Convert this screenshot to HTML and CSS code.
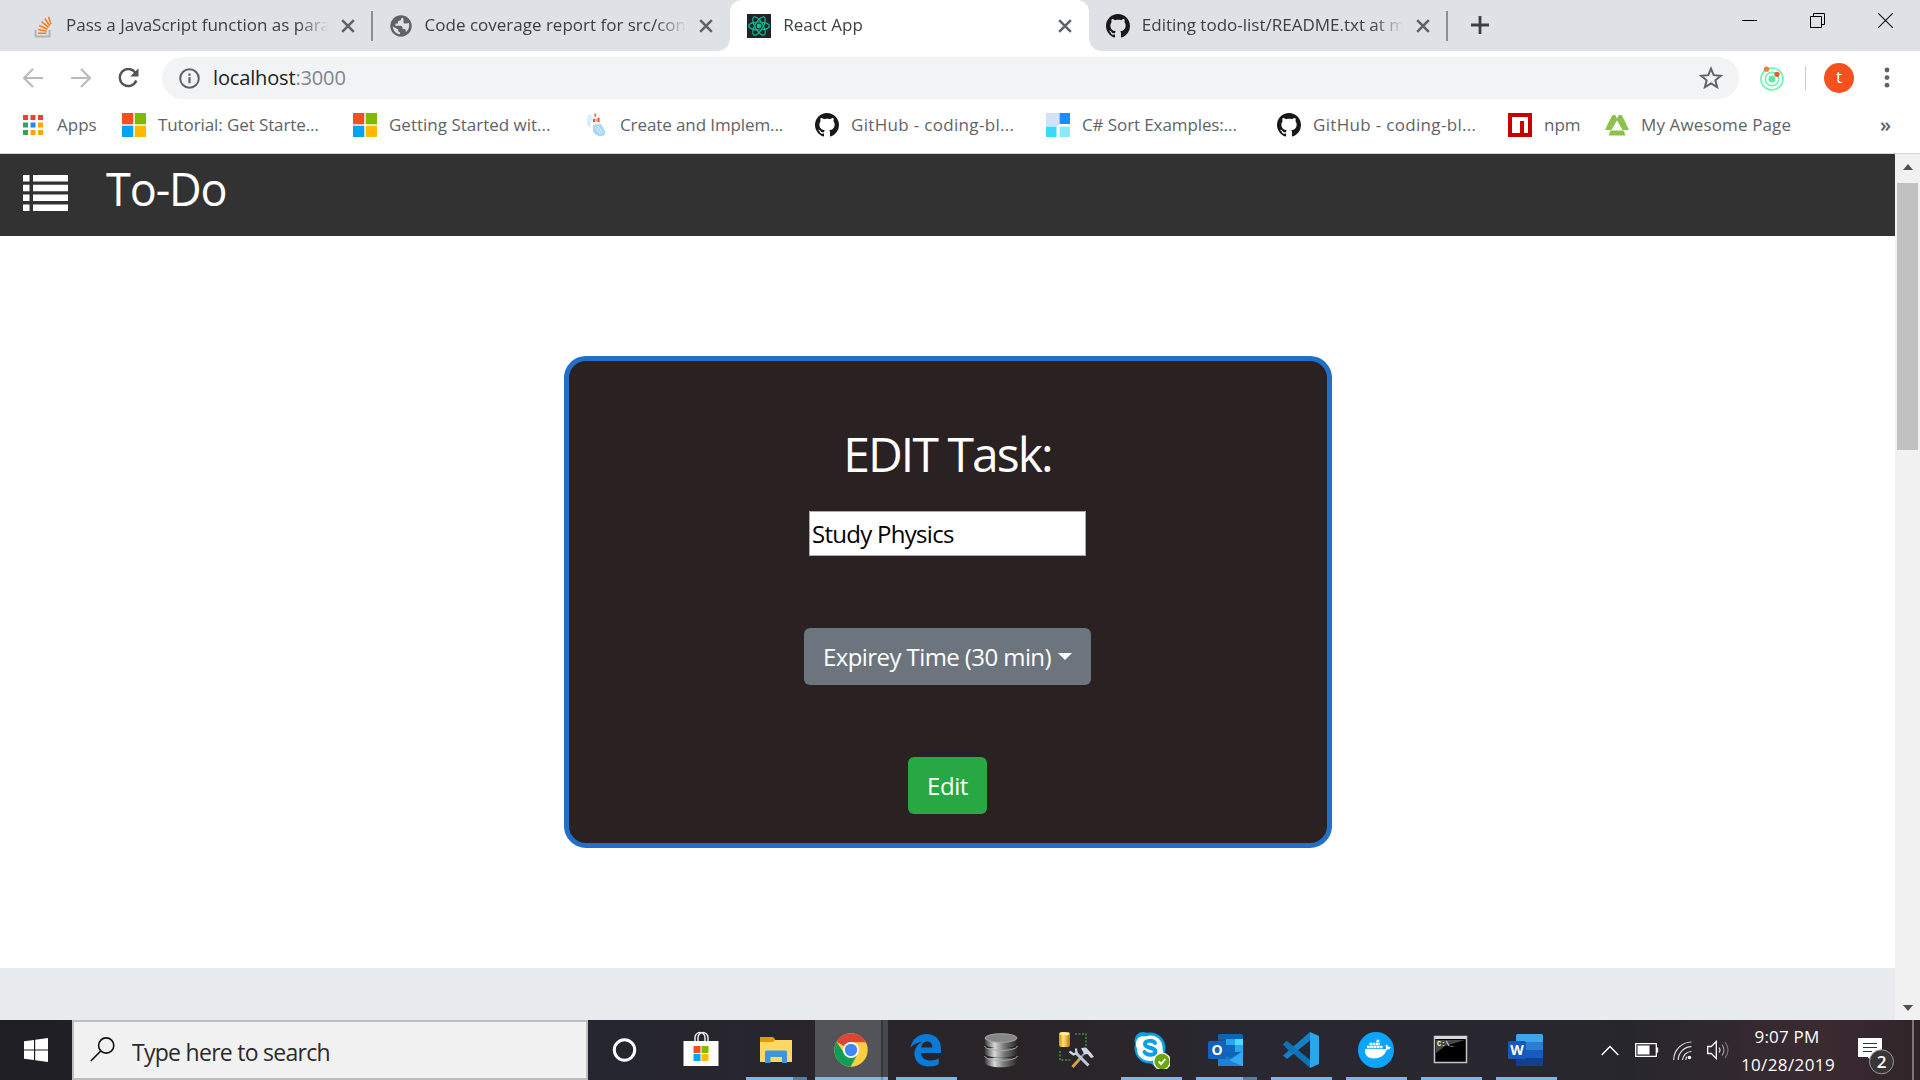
FILE: index.html
```html
<!DOCTYPE html>
<html lang="en">
<head>
<meta charset="utf-8">
<title>React App</title>
<link rel="stylesheet" href="styles.css">
</head>
<body>
<svg class="defs" width="0" height="0" aria-hidden="true">
  <symbol id="github" viewBox="0 0 16 16"><path fill="#191717" d="M8 0C3.58 0 0 3.58 0 8c0 3.54 2.29 6.53 5.47 7.59.4.07.55-.17.55-.38 0-.19-.01-.82-.01-1.49-2.01.37-2.53-.49-2.69-.94-.09-.23-.48-.94-.82-1.13-.28-.15-.68-.52-.01-.53.63-.01 1.08.58 1.23.82.72 1.21 1.87.87 2.33.66.07-.52.28-.87.51-1.07-1.78-.2-3.64-.89-3.64-3.95 0-.87.31-1.59.82-2.15-.08-.2-.36-1.02.08-2.12 0 0 .67-.21 2.2.82.64-.18 1.32-.27 2-.27s1.36.09 2 .27c1.53-1.04 2.2-.82 2.2-.82.44 1.1.16 1.92.08 2.12.51.56.82 1.27.82 2.15 0 3.07-1.87 3.75-3.65 3.95.29.25.54.73.54 1.48 0 1.07-.01 1.93-.01 2.2 0 .21.15.46.55.38A8.01 8.01 0 0 0 16 8c0-4.42-3.58-8-8-8z"/></symbol>
  <symbol id="close" viewBox="0 0 12 12"><path d="M1 1l10 10M11 1L1 11" stroke="#5f6368" stroke-width="2.200" fill="none"/></symbol>
  <symbol id="microsoft" viewBox="0 0 24 24"><path fill="#f25022" d="M0 0h11.3v11.3H0z"/><path fill="#7fba00" d="M12.7 0H24v11.3H12.7z"/><path fill="#00a4ef" d="M0 12.7h11.3V24H0z"/><path fill="#ffb900" d="M12.7 12.7H24V24H12.7z"/></symbol>
</svg>

<header class="tabs">
  <div class="tab">
    <svg class="icon24" viewBox="0 0 24 24"><path d="M5.500 16v6.500h14V16" fill="none" stroke="#b3b3b3" stroke-width="2"/><path d="M8 19.300h8.500M8.200 15.500l8.500 1.800M9.200 11.400l8.200 3.800M11.500 7.700l7 5.700M14.800 4.500l5 7.500M18.500 2.800l2.500 7.500" stroke="#f48024" stroke-width="1.600"/></svg>
    <span class="tab-title">Pass a JavaScript function as para</span>
    <svg class="close"><use href="#close"/></svg>
  </div>
  <div class="tab">
    <svg class="icon24" viewBox="0 0 24 24"><circle cx="12" cy="12" r="10.700" fill="#5f6368"/><path fill="#dee1e6" d="M14 3.800c-1.200 0-2 .8-2 1.800 0 .8-.6 1.200-1.500 1.200-1 0-1.500.5-1.500 1.400v1.200H7.500c-.8 0-1.200.6-1.200 1.300v1h5.200c1.200 0 2 .8 2 2v1.200h1.800c1 0 1.500.6 1.500 1.500v1.800c2-1.600 3.400-4 3.400-6.700 0-1-.2-1.900-.5-2.700-.5.5-1.200.8-2 .8h-1.500c-1 0-1.700-.8-1.700-1.700V6c0-.9-.2-1.600-.5-2.200zM3.700 12.500c.2 4 3.300 7.300 7.300 7.800v-2c-1 0-1.800-.8-1.800-1.800v-1z"/></svg>
    <span class="tab-title">Code coverage report for src/con</span>
    <svg class="close"><use href="#close"/></svg>
  </div>
  <div class="tab active">
    <svg class="icon24" viewBox="0 0 24 24"><path fill="#20232a" d="M0 0h24v24H0z"/><g fill="none" stroke="#0bbf93" stroke-width="1.200"><ellipse cx="12" cy="12" rx="10.300" ry="4"/><ellipse cx="12" cy="12" rx="10.300" ry="4" transform="rotate(60 12 12)"/><ellipse cx="12" cy="12" rx="10.300" ry="4" transform="rotate(120 12 12)"/></g><circle cx="12" cy="12" r="2.400" fill="#0bbf93"/></svg>
    <span class="tab-title">React App</span>
    <svg class="close"><use href="#close"/></svg>
  </div>
  <div class="tab">
    <svg class="icon24"><use href="#github"/></svg>
    <span class="tab-title">Editing todo-list/README.txt at m</span>
    <svg class="close"><use href="#close"/></svg>
  </div>
  <svg class="newtab" viewBox="0 0 18 18"><path d="M9 0v18M0 9h18" stroke="#3c4043" stroke-width="2.800"/></svg>
  <div class="winctl">
    <svg width="15" height="15" viewBox="0 0 15 15"><path d="M0 7.500h15" stroke="#000"/></svg>
    <svg width="15" height="15" viewBox="0 0 15 15"><path d="M.5 3.500h11v11H.5zM3.500 3.500v-3h11v11h-3" fill="none" stroke="#000"/></svg>
    <svg width="15" height="15" viewBox="0 0 15 15"><path d="M0 0l15 15M15 0L0 15" stroke="#111" stroke-width="1.100"/></svg>
  </div>
</header>

<div class="toolbar">
  <svg class="nav-icon" viewBox="0 0 20 20"><path d="M20 10H1.500M10 1L1 10l9 9" fill="none" stroke="#b8babc" stroke-width="2.200"/></svg>
  <svg class="nav-icon" viewBox="0 0 20 20"><path d="M0 10h18.500M10 1l9 9-9 9" fill="none" stroke="#b8babc" stroke-width="2.200"/></svg>
  <svg class="nav-icon reload" viewBox="0 0 21 20"><path d="M17.300 4.600A8.500 8.500 0 1 0 18.300 12.500" fill="none" stroke="#505357" stroke-width="2.400"/><path d="M20.500.2V8.500h-8.300z" fill="#505357"/></svg>
  <div class="omnibox">
    <svg class="info" viewBox="0 0 21 21"><circle cx="10.500" cy="10.500" r="9.300" fill="none" stroke="#5f6368" stroke-width="2"/><path d="M10.500 9.200v6M10.500 5.500v2.200" stroke="#5f6368" stroke-width="2.200"/></svg>
    <span class="url">localhost<span class="port">:3000</span></span>
    <svg class="star" viewBox="0 0 22 22"><path d="M11 2.400l2.500 6 6.500.5-5 4.200 1.600 6.300L11 16l-5.600 3.400L7 13.100 2 8.900l6.500-.5z" fill="none" stroke="#5f6368" stroke-width="1.800"/></svg>
  </div>
  <svg class="ext" viewBox="0 0 24 24"><g fill="none" stroke="#6ef5b8" stroke-width="1.700"><circle cx="12" cy="12.500" r="11"/><circle cx="12" cy="12.500" r="6.700"/></g><circle cx="12" cy="12.500" r="3.500" fill="#5fe9a5"/><circle cx="6.500" cy="2.700" r="2.600" fill="#f47c3c"/><circle cx="17" cy="7.800" r="2.600" fill="#f4552e"/></svg>
  <div class="tool-sep"></div>
  <div class="avatar">t</div>
  <svg class="dots" viewBox="0 0 6 22"><g fill="#5f6368"><circle cx="3" cy="3" r="2.400"/><circle cx="3" cy="10.600" r="2.400"/><circle cx="3" cy="18.200" r="2.400"/></g></svg>
</div>

<nav class="bookmarks">
  <div class="bm b0"><svg width="20" height="20" viewBox="0 0 20 20"><path fill="#ea4335" d="M0 0h5v5H0zM7.500 0h5v5h-5zM15 0h5v5h-5z"/><path fill="#34a063" d="M0 7.500h5v5H0zM0 15h5v5H0z"/><path fill="#1e88f5" d="M7.500 7.500h5v5h-5z"/><path fill="#f9a800" d="M15 7.500h5v5h-5zM7.500 15h5v5h-5zM15 15h5v5h-5z"/></svg><span>Apps</span></div>
  <div class="bm b1"><svg class="icon24"><use href="#microsoft"/></svg><span>Tutorial: Get Starte...</span></div>
  <div class="bm b2"><svg class="icon24"><use href="#microsoft"/></svg><span>Getting Started wit...</span></div>
  <div class="bm b3"><svg class="icon24" viewBox="0 0 24 24"><path fill="#d9eefa" d="M3 4l3-3 3 3-2 6-1 5-3-3z"/><path fill="#fdeee6" d="M8 3l3-2 5 3 1 6-7 1z"/><path fill="#e8503a" d="M10.500.5h1.500v3h-1.500zM9 6h2v3H9zM13.500 5h2v4h-2z"/><path fill="#f3a25f" d="M11.500 6h1.500v2.500h-1.500z"/><path fill="#a9d8f4" d="M9 12c3-1 6-1 8-1l4 7c1 3-1 5-4 5-4 0-7-2-8-5z"/><path d="M11 14l6 7M14 13l5 7" stroke="#e0f2fc"/></svg><span>Create and Implem...</span></div>
  <div class="bm b4"><svg class="icon24"><use href="#github"/></svg><span>GitHub - coding-bl...</span></div>
  <div class="bm b5"><svg class="icon24" viewBox="0 0 24 24"><path fill="#d2e3f8" d="M0 0h13v13H0z"/><path fill="#1a8cff" d="M13.500 0H24v11H13.500z"/><path fill="#38dcfb" d="M0 13.500h10.500V24H0z"/><path fill="#86ecfb" d="M13.500 13.500H24V24H13.500z"/></svg><span>C# Sort Examples:...</span></div>
  <div class="bm b6"><svg class="icon24"><use href="#github"/></svg><span>GitHub - coding-bl...</span></div>
  <div class="bm b7"><svg class="icon24" viewBox="0 0 24 24"><path fill="#cb0000" d="M0 0h24v24H0z"/><path fill="#fff" d="M4 4h16v16h-4V8h-4v12H4z"/></svg><span>npm</span></div>
  <div class="bm b8"><svg class="icon24" viewBox="0 0 24 24"><path fill="#8bc34a" d="M7.500 2h2.700l1.800 3.500L13.800 2h2.700L20 8.500l4 8.500h-6.500L12 7.500 6.500 17H0l4-8.500zM5.500 17.500h13l2 5h-17z"/><path fill="#fff" d="M12 8l4.200 8H7.800z"/></svg><span>My Awesome Page</span></div>
  <span class="more">»</span>
</nav>

<main class="viewport">
  <div class="page">
    <header class="app-bar">
      <svg class="list" viewBox="0 0 45 36"><path fill="#fff" d="M0 0h6.500v6.500H0zM10 0h35v6.500H10zM0 9.800h6.500v6.500H0zM10 9.800h35v6.500H10zM0 19.600h6.500v6.500H0zM10 19.600h35v6.500H10zM0 29.400h6.500v6.500H0zM10 29.400h35v6.500H10z"/></svg>
      <span class="brand">To-Do</span>
    </header>
    <section class="stage">
      <form class="card">
        <h1><span>EDIT Task:</span></h1>
        <div class="field"><span>Study Physics</span></div>
        <div class="btn select"><span>Expirey Time (30 min)</span><i class="caret"></i></div>
        <div class="btn submit"><span>Edit</span></div>
      </form>
    </section>
    <div class="band"></div>
  </div>
  <div class="scrollbar"><i class="arrow up"></i><div class="thumb"></div><i class="arrow down"></i></div>
</main>

<footer class="taskbar">
  <div class="start"><svg width="24" height="24" viewBox="0 0 24 24"><path fill="#fff" d="M0 3.300l10-1.400v9.500H0zM11.200 1.700L24 0v11.400H11.200zM0 12.600h10v9.500L0 20.700zM11.200 12.600H24V24l-12.800-1.700z"/></svg></div>
  <div class="search">
    <svg width="25" height="25" viewBox="0 0 25 25"><circle cx="16.200" cy="8.500" r="7.600" fill="none" stroke="#111" stroke-width="1.600"/><path d="M10.800 14L.8 24" stroke="#111" stroke-width="1.700"/></svg>
    <span>Type here to search</span>
  </div>
  <div class="apps">
    <div class="app"><svg width="38" height="38" viewBox="0 0 38 38"><circle cx="17.500" cy="19" r="10.200" fill="none" stroke="#fff" stroke-width="3"/></svg></div>
    <div class="app"><svg width="38" height="38" viewBox="0 0 38 38"><path d="M13 12V8a5 5 0 0 1 10 0v4M16 12V8a5 5 0 0 1 10 0v4" transform="translate(0 -1.500)" fill="none" stroke="#e8e8e8" stroke-width="1.500"/><path fill="#fff" d="M1.500 10h35v25h-35z"/><path fill="#f25022" d="M11.500 15h7v7h-7z"/><path fill="#7fba00" d="M19.500 15h7v7h-7z"/><path fill="#00a4ef" d="M11.500 23h7v7h-7z"/><path fill="#ffb900" d="M19.500 23h7v7h-7z"/></svg></div>
    <div class="app open multi"><svg width="38" height="38" viewBox="0 0 38 38"><path fill="#e09b00" d="M3 6h13l2 2v5H3z"/><path fill="#ffd765" d="M3 11h13l2-2h17v22H3z"/><path fill="#3f95dd" d="M8 21q0-1.500 1.500-1.500h19q1.500 0 1.500 1.500v11h-5v-6H13.500v6H8z"/></svg></div>
    <div class="app current"><svg width="38" height="38" viewBox="0 0 38 38"><circle cx="19" cy="19" r="16.700" fill="#ffcd40"/><path fill="#db4437" d="M19 19L4.500 10.700A16.700 16.700 0 0 1 33.800 11.300H19z"/><path fill="#0f9d58" d="M4.500 10.700A16.700 16.700 0 0 0 18.500 35.700L25.700 23 12 22z"/><circle cx="19" cy="19" r="8" fill="#fff"/><circle cx="19" cy="19" r="6.200" fill="#4285f4"/></svg></div>
    <div class="app open"><svg width="38" height="38" viewBox="0 0 38 38"><path fill="#0a7ad9" d="M3.500 17C5 8 11.500 3 19.500 3 29 3 34 9.500 34 18v4H14c.3 5 4.600 7.500 9.500 7.500 3.300 0 6-.8 8.200-2.200v6C29 35 26 35.500 22 35.500 13 35.500 7.500 30.500 7.500 23c0-5.500 3-9.700 7.500-12C9.500 11.500 5.500 13.500 3.500 17zM14.300 16.500h11C25.300 12.700 23.500 10.500 20 10.500c-3.300 0-5.300 2.600-5.700 6z"/></svg></div>
    <div class="app"><svg width="38" height="38" viewBox="0 0 38 38"><defs><linearGradient id="metal"><stop stop-color="#333"/><stop offset=".3" stop-color="#d8d8d8"/><stop offset=".6" stop-color="#777"/><stop offset="1" stop-color="#262626"/></linearGradient></defs><g fill="url(#metal)"><path d="M2.500 27h33v4c0 7-33 7-33 0zM2.500 17h33v4.500c0 7-33 7-33 0zM2.500 7h33v5c0 7-33 7-33 0z"/></g><g fill="none" stroke="#aaa"><path d="M2.500 15c2 6 31 6 33 0M2.500 25c2 6 31 6 33 0"/></g><ellipse cx="19" cy="7" rx="16" ry="4.300" fill="#868686" stroke="#a5a5a5"/></svg></div>
    <div class="app"><svg width="38" height="38" viewBox="0 0 38 38"><defs><linearGradient id="gold"><stop stop-color="#d98f00"/><stop offset=".4" stop-color="#ffe27a"/><stop offset="1" stop-color="#c07a00"/></linearGradient></defs><rect x="2" y="1" width="11" height="15" rx="2" fill="url(#gold)"/><ellipse cx="7.500" cy="2.800" rx="5" ry="1.600" fill="#ffe9a0"/><path d="M18 3h11v12M3 20v9h12" fill="none" stroke="#3f8f3f" stroke-width="1.500" stroke-dasharray="2 1.500"/><path d="M15.500 36l8-9" stroke="#d6a63a" stroke-width="2.800"/><path d="M23 27.500l6-7" stroke="#8b98a8" stroke-width="2"/><path d="M19 22l12.500 12.500" stroke="#b9c7d8" stroke-width="3"/><path d="M12.500 20.500l4 3 3-1.500-.5-4.500" fill="none" stroke="#cfd9e6" stroke-width="2.200"/><path fill="#cfd9e6" d="M24 17l5-.5 5 5.500 3 4-3 1-3.500-4-3 .500z"/></svg></div>
    <div class="app open"><svg width="38" height="38" viewBox="0 0 38 38"><g fill="#0b9fe6"><circle cx="18" cy="17" r="15.500"/><circle cx="11" cy="9.500" r="8.500"/><circle cx="25" cy="26" r="9"/></g><path fill="#fff" d="M18 4.500c8 0 13 6 12.500 13 2 6-2 12-8 12-8 2-18-2-17.500-12C2 11 6 4 12 5.500z"/><path d="M23 12c-2-3-10-3-10 1 0 5 10.500 2.500 10.500 7.500 0 4-8.500 4.500-11 .5" fill="none" stroke="#0b9fe6" stroke-width="4" stroke-linecap="round"/><circle cx="30" cy="30.500" r="8.300" fill="#6ba80e" stroke="#fff" stroke-width="1.300"/><path d="M26.800 30.500l2.200 2.500 4.300-5" fill="none" stroke="#fff" stroke-width="1.900"/></svg></div>
    <div class="app open multi"><svg width="38" height="38" viewBox="0 0 38 38"><rect x="11" y="3" width="25" height="32" rx="1.500" fill="#0f64b3"/><path fill="#28a8ea" d="M19 8h9v6h-9zM28 14h8v7h-8z"/><path fill="#50d9ff" d="M28 8h8v6h-8z"/><path fill="#0a5aaa" d="M11 8h8v13h-8z"/><path fill="#1268b8" d="M19 14h9v7h-9z"/><path fill="#1478cf" d="M11 21l12 6 13-7v15H11z"/><path fill="#34a9ed" d="M36 35H14l22-15z"/><path fill="#1e83d8" d="M11 24l24 11H11z"/><rect x="1" y="10" width="18" height="18" rx="1.500" fill="#1462be"/><text x="10" y="24" class="glyph">O</text></svg></div>
    <div class="app open"><svg width="38" height="38" viewBox="0 0 38 38"><path fill="#0d72b9" d="M1 13.500l4-3.500 23 19v8z"/><path fill="#167fc7" d="M1 24.500L28 1v8.500L5 28z"/><path fill="#0d72b9" d="M1 13.500L4 10l11 8-5 5z"/><path fill="#2aa6ee" d="M28 1l9 4v28l-9 4z"/></svg></div>
    <div class="app open"><svg width="38" height="38" viewBox="0 0 38 38"><circle cx="19" cy="19" r="18" fill="#0aa5ff"/><path fill="#fff" d="M8 18h21c.3-1.500 0-2.400-.5-3.300l.8-1.200c1.200.6 1.800 1.400 2 2.300 1-.2 1.700 0 2.400.3-.5 1.800-1.800 2.700-4 2.700C27.500 25 22.500 27.500 17 27.500c-6.500 0-9.800-4-9-9.500z"/><path d="M10 16h16M12.500 13h10.500M19.500 10h3.300" stroke="#fff" stroke-width="2.400" stroke-dasharray="2.700 .5"/></svg></div>
    <div class="app open"><svg width="38" height="38" viewBox="0 0 38 38"><rect x="2.500" y="5.500" width="32" height="26" fill="#000" stroke="#bfc4c8" stroke-width="1.500"/><path fill="#d7dadd" d="M3 5h31v3H3z"/><path fill="#484848" d="M4 9h29L13 15 4 22z"/><text x="5" y="15" class="prompt">C:\_</text></svg></div>
    <div class="app open"><svg width="38" height="38" viewBox="0 0 38 38"><path fill="#41a5ee" d="M9 4.500Q9 3 10.500 3H34.500Q36 3 36 4.500V11H9z"/><path fill="#2b7cd3" d="M9 11h27v8H9z"/><path fill="#185abd" d="M9 19h27v8H9z"/><path fill="#103f91" d="M9 27h27v6.500q0 1.500-1.500 1.500h-24Q9 35 9 33.500z"/><rect x="1" y="10" width="18" height="18" rx="1.500" fill="#1858bb"/><text x="10" y="24" class="glyph">W</text></svg></div>
  </div>
  <div class="tray">
    <svg width="18" height="11" viewBox="0 0 18 11"><path d="M.7 10L9 1.500l8.300 8.500" fill="none" stroke="#fff" stroke-width="1.500"/></svg>
    <svg width="24" height="14" viewBox="0 0 24 14"><path d="M.7.7h20.600v12.600H.7zM22.500 4.500v5" fill="none" stroke="#fff" stroke-width="1.300"/><path fill="#fff" d="M2.500 2.500h12v9h-12z"/></svg>
    <svg width="19" height="19" viewBox="0 0 19 19"><g fill="none" stroke="#ddd" stroke-width="1.200"><path d="M.7 19A18 18 0 0 1 18.500 1M5.200 19A13.500 13.500 0 0 1 18.500 5.700M9.500 19a9 9 0 0 1 9-8.500"/><path d="M13 19a5 5 0 0 1 1-3.500"/></g><circle cx="16.500" cy="16.500" r="1.700" fill="#fff"/></svg>
    <svg width="23" height="20" viewBox="0 0 23 20"><path d="M.7 6.500h3.600l5-5v17l-5-5H.7z" fill="none" stroke="#fff" stroke-width="1.300"/><g fill="none" stroke-width="1.200"><path stroke="#ddd" d="M12 7.500q2 2.500 0 5"/><path stroke="#999" d="M15 4.500q4 5.500 0 11"/><path stroke="#777" d="M18 2q6 8 0 16"/></g></svg>
  </div>
  <div class="clock"><span class="time">9:07 PM</span><span class="date">10/28/2019</span></div>
  <div class="notify">
    <svg width="36" height="38" viewBox="0 0 36 38"><path fill="#fff" d="M0 0h24v19H14.500v5l-5-5H0z"/><path d="M5 5.500h14M5 9.500h14M5 13.500h9" stroke="#333" stroke-width="1.200"/><circle cx="23.500" cy="23.800" r="12" fill="#3a3536" stroke="#999"/><text x="23.500" y="30" class="count">2</text></svg>
  </div>
  <div class="desktop-edge"></div>
</footer>
</body>
</html>
```
FILE: styles.css
```css
* { box-sizing: border-box; }
body { margin: 0; width: 1920px; height: 1080px; overflow: hidden; display: flex; flex-direction: column; background: #fff; font: 17px/24px "Open Sans", "Noto Sans", sans-serif; color: #3c4043; }
svg { display: block; flex: none; }
span { white-space: nowrap; }
.defs { position: absolute; }
.icon24 { width: 24px; height: 24px; }

.tabs { height: 51px; flex: none; display: flex; background: #dee1e6; padding-left: 13px; }
.tab { width: 358.600px; height: 51px; padding: 0 17px; display: flex; align-items: center; gap: 12px; position: relative; }
.tab:first-child::after, .tab:nth-child(4)::after { content: ""; width: 2px; height: 30px; background: #8b8e93; position: absolute; right: -1px; top: 11px; }
.tab-title { flex: 1; overflow: hidden; margin-top: -2px; -webkit-mask-image: linear-gradient(90deg, #000 88%, transparent); mask-image: linear-gradient(90deg, #000 88%, transparent); }
.close { width: 14px; height: 14px; }
.active { background: #fff; border-radius: 12px 12px 0 0; }
.active::before, .active::after { content: ""; position: absolute; bottom: 0; width: 12px; height: 12px; }
.active::before { left: -12px; background: radial-gradient(circle at 0 0, transparent 11.500px, #fff 12px); }
.active::after { right: -12px; background: radial-gradient(circle at 100% 0, transparent 11.500px, #fff 12px); }
.newtab { width: 18px; height: 18px; margin: 16px 0 0 24px; }
.winctl { margin: 13px 27px 0 auto; display: flex; gap: 53px; }

.toolbar { height: 54px; flex: none; display: flex; align-items: center; padding-left: 23px; }
.nav-icon { width: 20px; height: 20px; margin-right: 28px; }
.reload { width: 21px; margin: 0 23px 0 -1px; }
.omnibox { width: 1577px; height: 42px; border-radius: 21px; background: #f1f3f4; display: flex; align-items: center; padding: 0 16px 0 17px; }
.info { width: 21px; height: 21px; margin-right: 13px; }
.url { font-size: 20px; color: #202124; letter-spacing: -.15px; }
.port { color: #80868b; }
.star { width: 24px; height: 24px; margin-left: auto; }
.ext { width: 24px; height: 25px; margin-left: 21px; }
.tool-sep { width: 1px; height: 24px; margin: 0 18px 0 21px; background: #c9ccd0; }
.avatar { width: 30px; height: 30px; border-radius: 50%; background: #f4511e; color: #fff; text-align: center; line-height: 28px; font-size: 17px; }
.dots { width: 6px; height: 22px; margin-left: 30px; }

.bookmarks { height: 49px; flex: none; display: flex; padding: 0 0 9px 23px; border-bottom: 1px solid #d5d5d5; color: #5f6368; }
.bm { display: flex; align-items: center; gap: 12px; flex: none; }
.b0 { width: 99px; gap: 14px; }
.b1, .b2, .b3, .b4, .b5, .b6 { width: 231px; }
.b1, .b3, .b5 { letter-spacing: -.1px; }
.b4, .b6 { letter-spacing: .32px; }
.b7 { width: 97px; }
.b8 { letter-spacing: .13px; }
.more { margin: 8px 29px 0 auto; font-size: 20px; font-weight: 600; }

.viewport { flex: 1; min-height: 0; display: flex; }
.page { flex: 1; display: flex; flex-direction: column; }
.app-bar { height: 82px; flex: none; background: #323232; display: flex; padding-left: 23px; }
.list { width: 45px; height: 36px; margin-top: 21px; }
.brand { margin: 5px 0 0 38px; color: #fff; font-size: 45px; line-height: 60px; letter-spacing: -1.100px; }
.stage { height: 732px; flex: none; padding-top: 120px; display: flex; justify-content: center; align-items: flex-start; background: #fff; }
.card { width: 768px; height: 492px; border: 5px solid #216fc6; border-radius: 22px; background: #292122; display: flex; flex-direction: column; align-items: center; color: #fff; font-size: 24px; letter-spacing: -.72px; }
.card h1 { margin: 63px 0 0; height: 87px; font-weight: 400; font-size: 48px; line-height: 60px; letter-spacing: -1.900px; }
.field { width: 277px; height: 45px; border: 1px solid #aaa; background: #fff; color: #000; padding-left: 2px; line-height: 43px; }
.btn { height: 57px; border-radius: 6px; display: flex; align-items: center; justify-content: center; }
.select { width: 287px; margin-top: 72px; background: #6c757d; gap: 7px; letter-spacing: -.58px; }
.caret { border: 7px solid transparent; border-top-color: #fff; border-bottom: 0; }
.submit { width: 79px; margin-top: 72px; background: #28a745; letter-spacing: -.4px; }
.band { flex: 1; background: #e7ebee; }
.scrollbar { width: 25px; background: #f1f1f1; display: flex; flex-direction: column; align-items: center; padding: 10px 0 9px; }
.thumb { width: 21px; height: 267px; background: #c1c1c1; margin-top: 13px; }
.arrow { border: 5.500px solid transparent; }
.up { border-bottom: 6px solid #505050; border-top: 0; }
.down { border-top: 6px solid #505050; border-bottom: 0; margin-top: auto; }

.taskbar { height: 60px; flex: none; display: flex; color: #fff; background: linear-gradient(90deg, #1e1e24 0, #262630 32%, #2a2427 53%, #292831 65%, #28262d 85%, #3a2b31 95%, #302429); }
.start { width: 72px; display: flex; align-items: center; justify-content: center; }
.search { width: 516px; border: 2px solid #bebebe; background: #f1f1f1; color: #2b2b2b; display: flex; align-items: center; gap: 17px; padding-left: 16px; font-size: 23px; letter-spacing: -.72px; }
.search svg { margin-top: -1px; }
.search span { margin-top: 3px; }
.apps { display: flex; }
.app { width: 75px; display: flex; justify-content: center; align-items: center; position: relative; }
.open::after, .current::after { content: ""; position: absolute; left: 8px; bottom: 0; width: 61px; height: 3px; background: #76b9ed; }
.multi::after { background: linear-gradient(90deg, #76b9ed 47px, #557f9f 47px); }
.current::before { content: ""; position: absolute; left: 2px; top: 0; width: 73px; height: 60px; background: linear-gradient(90deg, #53535a 66px, #35353b 66px, #35353b 68px, #47474e 68px); }
.current svg { position: relative; }
.current::after { left: 2px; width: 73px; background: linear-gradient(90deg, #76b9ed 66px, #6296bf 66px, #6296bf 68px, #76b9ed 68px); }
.glyph { font: 700 14px "Open Sans", sans-serif; fill: #fff; text-anchor: middle; }
.prompt { font: 700 7px "Liberation Mono", monospace; fill: #fff; }
.tray { width: 129px; margin-left: 38px; display: flex; align-items: center; gap: 15px; }
.tray svg:nth-child(2) { margin: 0 -1px 0 1px; }
.clock { width: 116px; display: flex; flex-direction: column; align-items: center; padding-top: 3px; line-height: 28px; }
.time { letter-spacing: .2px; margin-right: 2px; }
.date { letter-spacing: .4px; }
.notify { width: 66px; padding: 18px 0 0 12px; }
.count { font: 600 17px "Open Sans", sans-serif; fill: #fff; text-anchor: middle; }
.desktop-edge { width: 2px; background: #7b7679; }
```
